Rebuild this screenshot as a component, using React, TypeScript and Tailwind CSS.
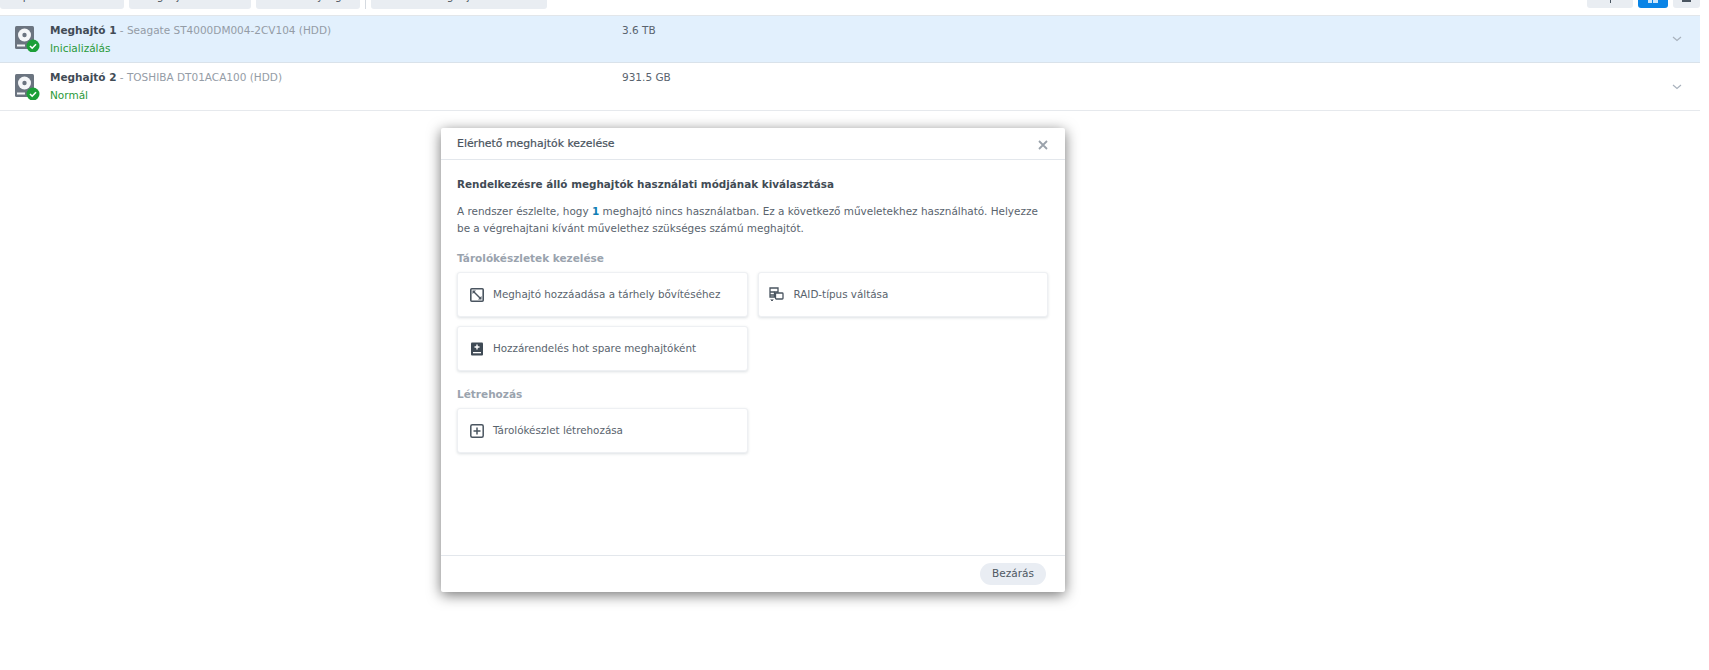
const font = { fontFamily: '"DejaVu Sans", Verdana, sans-serif' };

function DriveIcon() {
  return (
    <svg width="28" height="26" viewBox="0 0 28 26" className="shrink-0">
      <rect x="1" y="0" width="19" height="23" rx="1.5" fill="#6b7480" />
      <circle cx="10.5" cy="9" r="6.5" fill="#f4f6f8" />
      <circle cx="10.5" cy="9" r="2.2" fill="#6b7480" />
      <rect x="3" y="18.5" width="8" height="2" fill="#f4f6f8" />
      <circle cx="19" cy="20" r="6.5" fill="#1c9f38" />
      <path d="M16 20l2.2 2.2 3.8-4" fill="none" stroke="#fff" strokeWidth="1.6" />
    </svg>
  );
}

function Chevron() {
  return (
    <svg width="10" height="6" viewBox="0 0 10 6" className="shrink-0">
      <path d="M1 1l4 3.5L9 1" fill="none" stroke="#a9b2bd" strokeWidth="1.2" />
    </svg>
  );
}

function DriveRow(props: { name: string; model: string; status: string; size: string; active?: boolean }) {
  return (
    <div className={`flex items-center pl-[14px] pr-[18px] border-b ${props.active ? 'h-[47px] bg-[#e2f0fd] border-[#d9e2ea]' : 'h-[48px] bg-white border-[#e6e9ed]'}`}>
      <DriveIcon />
      <div className="w-[580px] pl-[8px] text-[10.5px] leading-[17px]">
        <div>
          <span className="font-bold text-[#414b55]">{props.name}</span>
          <span className="text-[#949ca6]"> - {props.model}</span>
        </div>
        <div className="mt-px text-[#2a9a3a]">{props.status}</div>
      </div>
      <div className="flex-1 self-start pt-[7px] text-[10.5px] text-[#59636e]">{props.size}</div>
      <Chevron />
    </div>
  );
}

function ActionCard(props: { label: string; icon: React.ReactNode }) {
  return (
    <div className="flex items-center gap-[9px] h-[45px] pl-[12px] bg-white rounded-[3px] border border-[#eef0f3] shadow-[0_1px_3px_rgba(40,60,80,0.16)] text-[10.35px] text-[#59636d]">
      {props.icon}
      <span>{props.label}</span>
    </div>
  );
}

function ToolbarButton(props: { label: string; width: string }) {
  return (
    <div className={`flex justify-center h-[9px] bg-[#e9edf2] rounded-b-[3px] overflow-hidden ${props.width}`}>
      <span className="text-[10.5px] leading-[14px] mt-[-11px] text-[#4e5862]">{props.label}</span>
    </div>
  );
}

const iconExpand = (
  <svg width="14" height="14" viewBox="0 0 14 14" className="shrink-0">
    <rect x="0.800" y="0.800" width="12.400" height="12.400" rx="1" fill="#fff" stroke="#4a5560" strokeWidth="1.600" />
    <path d="M2.500 2.500h3.500l-3.500 3.500z" fill="#4a5560" />
    <path d="M11.500 11.500H8l3.500-3.500z" fill="#4a5560" />
    <path d="M3.500 3.500l7 7" stroke="#4a5560" strokeWidth="1.400" />
  </svg>
);

const iconRaid = (
  <svg width="15" height="15" viewBox="0 0 15 15" className="shrink-0 -ml-[2px] mr-px">
    <path d="M1 1h8v4H5.500v5H1z" fill="none" stroke="#4a5560" strokeWidth="1.300" />
    <path d="M1 5h4.500M1 8h4.500" stroke="#4a5560" strokeWidth="1.300" />
    <rect x="6.500" y="6" width="7.500" height="6" rx="0.800" fill="#fff" stroke="#4a5560" strokeWidth="1.300" />
    <path d="M3 12v1.500M1.800 12.500L3 14l1.200-1.500" fill="none" stroke="#4a5560" strokeWidth="1" />
  </svg>
);

const iconSpare = (
  <svg width="14" height="14" viewBox="0 0 14 14" className="shrink-0">
    <rect x="1" y="0.500" width="12" height="13" rx="1" fill="#3f4a55" />
    <path d="M7 2.500v5M4.500 5h5" stroke="#fff" strokeWidth="1.400" />
    <rect x="3" y="10" width="8" height="1.300" fill="#fff" />
  </svg>
);

const iconCreate = (
  <svg width="14" height="14" viewBox="0 0 14 14" className="shrink-0">
    <rect x="0.800" y="0.800" width="12.400" height="12.400" rx="1.500" fill="none" stroke="#4a5560" strokeWidth="1.500" />
    <path d="M7 3.500v7M3.500 7h7" stroke="#4a5560" strokeWidth="1.500" />
  </svg>
);

export default function App() {
  return (
    <div style={font} className="relative w-[1709px] h-[670px] overflow-hidden bg-white">
      <div className="w-[1700px]">
        {/* Toolbar, scrolled mostly off the top */}
        <div className="flex items-start justify-between h-[16px] border-b border-[#e2e6ea]">
          <div className="flex items-start gap-[5px]">
            <ToolbarButton width="w-[124px]" label="Alapvető információk" />
            <ToolbarButton width="w-[122px]" label="Meghajtó kezelése" />
            <ToolbarButton width="w-[104px]" label="Tevékenység" />
            <div className="w-px h-[9px] bg-[#d5dae0]" />
            <ToolbarButton width="w-[176px]" label="Elérhető meghajtók kezelése" />
          </div>
          <div className="flex items-start gap-[5px]">
            <div className="flex justify-center w-[46px] h-[8px] bg-[#e9edf2] rounded-b-[3px]"><div className="w-px h-[3px] bg-[#4a5560]" /></div>
            <div className="flex justify-center gap-px w-[30px] h-[8px] bg-[#0a84e6] rounded-b-[3px]"><div className="w-[4px] h-[3px] bg-white/80" /><div className="w-[5px] h-[3px] bg-white/80" /></div>
            <div className="flex justify-center w-[27px] h-[8px] bg-[#e9edf2] rounded-b-[3px]"><div className="w-[9px] h-[2px] bg-[#4a5560]" /></div>
          </div>
        </div>
        <DriveRow active name="Meghajtó 1" model="Seagate ST4000DM004-2CV104 (HDD)" status="Inicializálás" size="3.6 TB" />
        <DriveRow name="Meghajtó 2" model="TOSHIBA DT01ACA100 (HDD)" status="Normál" size="931.5 GB" />
      </div>

      {/* Dialog */}
      <div className="absolute left-[441px] top-[128px] w-[624px] h-[464px] flex flex-col bg-white rounded-[2px] shadow-[0_3px_14px_rgba(0,0,0,0.55)]">
        <div className="flex items-center justify-between h-[32px] pl-[16px] pr-[17px] pt-[2px] border-b border-[#e3e7ec]">
          <span className="text-[10.9px] text-[#49535d] [-webkit-text-stroke:0.2px_#49535d]">Elérhető meghajtók kezelése</span>
          <svg width="10" height="10" viewBox="0 0 10 10">
            <path d="M1 1l8 8M9 1L1 9" stroke="#9aa2ab" strokeWidth="1.800" />
          </svg>
        </div>
        <div className="flex-1 pt-[16px] pl-[16px] pr-[17px]">
          <div className="text-[10.4px] font-bold text-[#414b55] leading-[17px]">Rendelkezésre álló meghajtók használati módjának kiválasztása</div>
          <p className="mt-[10px] text-[10.45px] leading-[17px] text-[#59636d]">
            A rendszer észlelte, hogy <span className="font-bold text-[#0f7fb5]">1</span> meghajtó nincs használatban. Ez a következő műveletekhez használható. Helyezze be a végrehajtani kívánt művelethez szükséges számú meghajtót.
          </p>
          <div className="mt-[13px] text-[10.5px] font-bold leading-[17px] text-[#9aa3ae]">Tárolókészletek kezelése</div>
          <div className="grid grid-cols-2 gap-x-[10px] gap-y-[9px] mt-[5px]">
            <ActionCard icon={iconExpand} label="Meghajtó hozzáadása a tárhely bővítéséhez" />
            <ActionCard icon={iconRaid} label="RAID-típus váltása" />
            <ActionCard icon={iconSpare} label="Hozzárendelés hot spare meghajtóként" />
          </div>
          <div className="mt-[15px] text-[10.5px] font-bold leading-[17px] text-[#9aa3ae]">Létrehozás</div>
          <div className="grid grid-cols-2 gap-x-[10px] mt-[5px]">
            <ActionCard icon={iconCreate} label="Tárolókészlet létrehozása" />
          </div>
        </div>
        <div className="flex items-center justify-end h-[37px] pr-[19px] border-t border-[#e3e7ec]">
          <div className="flex items-center justify-center w-[66px] h-[22px] rounded-full bg-[#e9edf3] text-[10.5px] text-[#4e5862]">Bezárás</div>
        </div>
      </div>
    </div>
  );
}
